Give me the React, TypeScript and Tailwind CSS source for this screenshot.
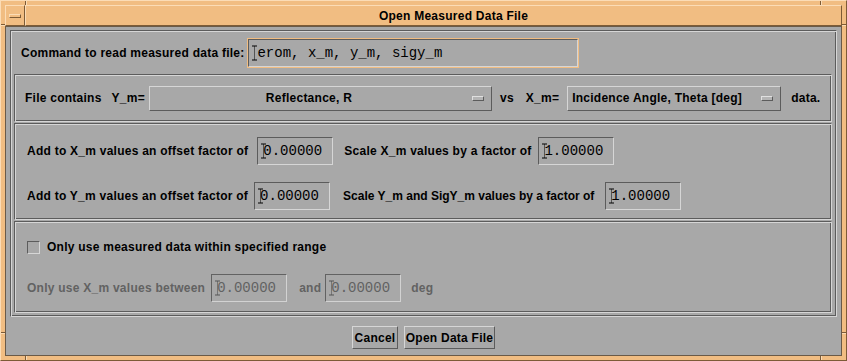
import React from "react";

const Cursor = ({ dim }: { dim?: boolean }) => (
  <span className="absolute left-[3px] top-1/2 -translate-y-1/2 h-[15px] w-[5px] flex flex-col items-center">
    <span className={dim ? "w-[5px] h-px bg-[#555]" : "w-[5px] h-px bg-black"} />
    <span className={dim ? "w-px flex-1 border-l border-dotted border-[#444]" : "w-px flex-1 border-l border-dotted border-black"} />
    <span className={dim ? "w-[5px] h-px bg-[#555]" : "w-[5px] h-px bg-black"} />
  </span>
);

const NumField = ({ value, dim }: { value: string; dim?: boolean }) => (
  <div
    className={
      dim
        ? "relative w-[76px] h-[28px] flex items-center pl-[5px] border border-t-[#626262] border-l-[#626262] border-b-[#d2d2d2] border-r-[#d2d2d2] font-['Liberation_Mono',monospace] font-normal tracking-normal text-[14px] text-[#626262]"
        : "relative w-[76px] h-[28px] flex items-center pl-[5px] border border-t-[#5c5c5c] border-l-[#5c5c5c] border-b-[#d6d6d6] border-r-[#d6d6d6] font-['Liberation_Mono',monospace] font-normal tracking-normal text-[14px] text-black"
    }
  >
    <Cursor dim={dim} />
    <span>{value}</span>
  </div>
);

const Dropdown = ({ text, w, center }: { text: string; w: string; center?: boolean }) => (
  <div
    className={
      "relative h-[25px] flex items-center border border-t-[#d6d6d6] border-l-[#d6d6d6] border-b-[#5c5c5c] border-r-[#5c5c5c] " +
      w
    }
  >
    <span className={center ? "flex-1 text-center pr-[4px]" : "flex-1 pl-[4px]"}>{text}</span>
    <span className="mr-[7px] w-[12px] h-[5px] border border-t-[#e0e0e0] border-l-[#e0e0e0] border-b-[#5c5c5c] border-r-[#5c5c5c] bg-[#b4b4b4]" />
  </div>
);

const sectionCls =
  "border border-t-[#5c5c5c] border-l-[#5c5c5c] border-b-[#d6d6d6] border-r-[#d6d6d6] shadow-[inset_1px_1px_0_#d6d6d6,inset_-1px_-1px_0_#5c5c5c]";

export default function App() {
  return (
    <div className="w-[847px] h-[361px] bg-[#f1bd82] relative border border-t-[#fbdcb6] border-l-[#fbdcb6] border-b-[#7d5b36] border-r-[#7d5b36] p-[4px] flex flex-col font-['Liberation_Sans',Arial,sans-serif] font-bold text-[12px] tracking-[0.25px] text-black leading-none overflow-hidden">
      {/* frame ticks */}
      <span className="absolute left-[24px] top-0 h-[4px] w-px bg-[#7d5b36]" />
      <span className="absolute left-[25px] top-0 h-[4px] w-px bg-[#fbdcb6]" />
      <span className="absolute left-[819px] top-0 h-[4px] w-px bg-[#7d5b36]" />
      <span className="absolute left-[820px] top-0 h-[4px] w-px bg-[#fbdcb6]" />
      <span className="absolute left-[24px] bottom-0 h-[4px] w-px bg-[#7d5b36]" />
      <span className="absolute left-[25px] bottom-0 h-[4px] w-px bg-[#fbdcb6]" />
      <span className="absolute left-[819px] bottom-0 h-[4px] w-px bg-[#7d5b36]" />
      <span className="absolute left-[820px] bottom-0 h-[4px] w-px bg-[#fbdcb6]" />
      <span className="absolute left-0 top-[23px] w-[4px] h-px bg-[#7d5b36]" />
      <span className="absolute left-0 top-[24px] w-[4px] h-px bg-[#fbdcb6]" />
      <span className="absolute right-0 top-[23px] w-[4px] h-px bg-[#7d5b36]" />
      <span className="absolute right-0 top-[24px] w-[4px] h-px bg-[#fbdcb6]" />
      <span className="absolute left-0 top-[331px] w-[4px] h-px bg-[#7d5b36]" />
      <span className="absolute left-0 top-[332px] w-[4px] h-px bg-[#fbdcb6]" />
      <span className="absolute right-0 top-[331px] w-[4px] h-px bg-[#7d5b36]" />
      <span className="absolute right-0 top-[332px] w-[4px] h-px bg-[#fbdcb6]" />

      {/* title bar */}
      <div className="h-[21px] flex shrink-0">
        <div className="w-[20px] h-full flex items-center justify-center border border-t-[#fbdcb6] border-l-[#fbdcb6] border-b-[#7d5b36] border-r-[#7d5b36]">
          <span className="w-[12px] h-[4px] border border-t-[#fbdcb6] border-l-[#fbdcb6] border-b-[#7d5b36] border-r-[#7d5b36]" />
        </div>
        <div className="flex-1 h-full flex items-center justify-center border border-t-[#fbdcb6] border-l-[#fbdcb6] border-b-[#7d5b36] border-r-[#7d5b36] pl-[40px]">
          Open Measured Data File
        </div>
      </div>

      {/* content */}
      <div className="h-[330px] bg-[#a8a8a8] flex flex-col pt-[3px] pl-[4px] pr-[4px] border border-t-[#6a5a48] border-l-[#6a5a48] border-b-[#6a5a48] border-r-[#6a5a48]">
        <div className={"h-[287px] flex flex-col px-[3px] " + sectionCls}>
          {/* command row */}
          <div className="h-[43px] flex items-center pl-[7px]">
            <span>Command to read measured data file:</span>
            <div className="ml-[3px] w-[332px] h-[30px] border border-[#f1bd82] flex">
              <div className="relative flex-1 flex items-center pl-[8px] border border-t-[#5c5c5c] border-l-[#5c5c5c] border-b-[#d6d6d6] border-r-[#d6d6d6] font-['Liberation_Mono',monospace] font-normal tracking-normal text-[14px] whitespace-pre">
                <Cursor />
                <span>erom, x_m, y_m, sigy_m</span>
              </div>
            </div>
          </div>

          {/* section 2 */}
          <div className={"h-[48px] w-[818px] flex items-center pl-[10px] " + sectionCls}>
            <span>File contains</span>
            <span className="ml-[10px]">Y_m=</span>
            <div className="ml-[4px]">
              <Dropdown text="Reflectance, R" w="w-[343px]" center />
            </div>
            <span className="ml-[8px]">vs</span>
            <span className="ml-[12px]">X_m=</span>
            <div className="ml-[8px]">
              <Dropdown text="Incidence Angle, Theta [deg]" w="w-[214px]" />
            </div>
            <span className="ml-[10px]">data.</span>
          </div>

          {/* section 3 */}
          <div className={"mt-[1px] h-[97px] w-[818px] flex flex-col pt-[13px] pl-[12px] " + sectionCls}>
            <div className="h-[28px] flex items-center">
              <span>Add to X_m values an offset factor of</span>
              <div className="ml-[9px]">
                <NumField value="0.00000" />
              </div>
              <span className="ml-[11px]">Scale X_m values by a factor of</span>
              <div className="ml-[7px]">
                <NumField value="1.00000" />
              </div>
            </div>
            <div className="mt-[17px] h-[28px] flex items-center">
              <span>Add to Y_m values an offset factor of</span>
              <div className="ml-[6px]">
                <NumField value="0.00000" />
              </div>
              <span className="ml-[13px] tracking-normal">Scale Y_m and SigY_m values by a factor of</span>
              <div className="ml-[11px]">
                <NumField value="1.00000" />
              </div>
            </div>
          </div>

          {/* section 4 */}
          <div className={"mt-[1px] h-[92px] w-[818px] flex flex-col pt-[18px] pl-[12px] " + sectionCls}>
            <div className="h-[14px] flex items-center">
              <span className="w-[13px] h-[13px] border border-t-[#5c5c5c] border-l-[#5c5c5c] border-b-[#d6d6d6] border-r-[#d6d6d6]" />
              <span className="ml-[7px]">Only use measured data within specified range</span>
            </div>
            <div className="mt-[20px] h-[28px] flex items-center text-[#626262]">
              <span>Only use X_m values between</span>
              <div className="ml-[6px]">
                <NumField value="0.00000" dim />
              </div>
              <span className="ml-[12px]">and</span>
              <div className="ml-[4px]">
                <NumField value="0.00000" dim />
              </div>
              <span className="ml-[10px]">deg</span>
            </div>
          </div>
        </div>

        {/* buttons */}
        <div className="mt-[9px] flex justify-center gap-[6px]">
          <div className="w-[46px] h-[23px] flex items-center justify-center border border-t-[#d6d6d6] border-l-[#d6d6d6] border-b-[#5c5c5c] border-r-[#5c5c5c]">
            Cancel
          </div>
          <div className="w-[91px] h-[23px] flex items-center justify-center border border-t-[#d6d6d6] border-l-[#d6d6d6] border-b-[#5c5c5c] border-r-[#5c5c5c]">
            Open Data File
          </div>
        </div>
      </div>
    </div>
  );
}
